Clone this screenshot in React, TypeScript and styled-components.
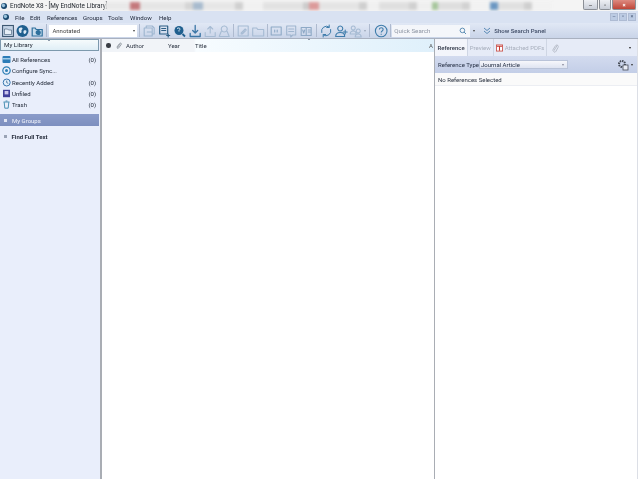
import React from "react";
import styled, { createGlobalStyle } from "styled-components";

const Global = createGlobalStyle`
  html, body { margin: 0; padding: 0; background: #fff; }
  body { font-family: Roboto, "Liberation Sans", sans-serif; }
  #root { width: 638px; height: 479px; overflow: hidden; }
`;

const Page = styled.div`
  width: 638px; height: 479px; display: flex; flex-direction: column;
  background: #fff; color: #1d2430; font-size: 6px; filter: blur(0.3px); overflow: hidden;
`;

const TitleBar = styled.header`
  height: 11px; flex: none; display: flex; align-items: center; position: relative;
  background: #f4f4f4; overflow: hidden;
`;
const AppIcon = styled.span<{ $mx: string }>`
  width: 6px; height: 6px; border-radius: 50%; flex: none;
  margin: ${(p) => p.$mx};
  background: radial-gradient(circle at 40% 40%, #9cc4dd 0 22%, #1c4c73 45%, #123754 100%);
`;
const TitleText = styled.span`
  font-size: 6.4px; color: #23282f; white-space: nowrap; width: 95px; flex: none;
`;
const Ghosts = styled.div`
  flex: 1; display: flex; align-items: center; height: 11px; filter: blur(1.5px); min-width: 0;
`;
const Ghost = styled.span<{ $w: number; $c: string }>`
  width: ${(p) => p.$w}px; height: 8px; background: ${(p) => p.$c}; flex: none;
`;
const WinControls = styled.div`
  display: flex; height: 10px; flex: none; margin-right: 2px; gap: 1px; align-self: flex-start;
`;
const WinBtn = styled.span<{ $w: number; $bg: string; $c: string }>`
  width: ${(p) => p.$w}px; height: 10px; display: flex; align-items: center; justify-content: center;
  background: ${(p) => p.$bg}; border: 1px solid #8b8f96; border-top: none; box-sizing: border-box;
  border-radius: 0 0 2px 2px; color: ${(p) => p.$c}; font-size: 6px; font-weight: 700; line-height: 1;
`;

const MenuBar = styled.nav`
  height: 12px; flex: none; display: flex; align-items: center;
  background: #d9e2f2; font-size: 6.1px;
`;
const MenuItem = styled.span<{ $w: number }>`
  width: ${(p) => p.$w}px; flex: none; white-space: nowrap; color: #20283a;
`;
const DocControls = styled.div`
  margin-left: auto; margin-right: 2px; display: flex; gap: 1px;
`;
const DocBtn = styled.span`
  width: 8px; height: 8px; background: #bccbe3; border: 1px solid #aebbd3; box-sizing: border-box;
  display: flex; align-items: center; justify-content: center; font-size: 5.5px; line-height: 1; color: #4a5a78;
`;

const Toolbar = styled.div`
  height: 16px; flex: none; display: flex; align-items: center; padding-left: 2px;
  background: linear-gradient(#e1e8f5, #c9d4e8); border-bottom: 1px solid #a9b1c0; box-sizing: border-box;
`;
const Group = styled.div`
  display: flex; align-items: center; gap: 0.5px;
`;
const Sep = styled.span<{ $mx?: number }>`
  width: 1px; height: 13px; background: #aebacf; flex: none; margin: 0 ${(p) => p.$mx ?? 2}px;
`;
const StyleSelect = styled.div`
  width: 88px; height: 12px; background: #fff; flex: none; display: flex; align-items: center;
  justify-content: space-between; padding: 0 2px 0 3px; box-sizing: border-box; color: #444;
`;
const Caret = styled.span<{ $c?: string }>`
  display: block; width: 0; height: 0; flex: none; border-left: 1.5px solid transparent; border-right: 1.5px solid transparent;
  border-top: 2px solid ${(p) => p.$c ?? "#444"};
`;
const IconSvg = styled.svg<{ $w?: number }>`
  width: ${(p) => p.$w ?? 14.4}px; height: 14px; flex: none;
`;
const SearchBox = styled.div`
  width: 78px; height: 12px; flex: none; background: #f4f6fa; display: flex; align-items: center;
  justify-content: space-between; padding: 0 3px 0 2px; box-sizing: border-box; color: #8d95a3; font-size: 6.2px;
`;
const SearchCaret = styled(Caret)`
  margin-left: 3px;
`;
const ShowPanel = styled.span`
  margin-left: 8px; font-weight: 500; color: #3f4c66; white-space: nowrap; display: flex; align-items: center; gap: 3px;
`;

const Body = styled.main`
  flex: 1; display: flex; min-height: 0; background: #d7dfee;
`;
const Left = styled.aside`
  width: 100px; flex: none; background: #e9eefb; display: flex; flex-direction: column;
`;
const LibHead = styled.div`
  height: 12px; flex: none; display: flex; align-items: center; padding-left: 3px; margin: 0 1px 0 0;
  border: 1px solid #7d99ad; background: linear-gradient(#f6fbfc, #dfeef6); box-sizing: border-box;
  color: #1c2430; position: relative; font-size: 6.2px;
`;
const Nub = styled.span`
  position: absolute; top: 0; left: 47px; width: 2px; height: 1px; background: #8d9bab;
`;
const LibList = styled.ul`
  list-style: none; margin: 3px 0 0; padding: 0;
`;
const LibRow = styled.li`
  height: 11.3px; display: flex; align-items: center; padding: 0 4px 0 1.5px; gap: 1.5px; color: #222a38;
`;
const LibCount = styled.span`
  margin-left: auto;
`;
const GroupsBar = styled.div`
  height: 12px; flex: none; margin: 4px 1px 0 0; background: linear-gradient(#8a9bc9, #7d8fbf);
  display: flex; align-items: center; gap: 5px; padding-left: 4px; color: #f2f4fb;
`;
const Square = styled.span<{ $c: string }>`
  width: 3px; height: 3px; background: ${(p) => p.$c}; flex: none;
`;
const FindRow = styled.div`
  display: flex; align-items: center; gap: 5px; padding-left: 3.5px; margin-top: 4.5px; height: 12px;
  font-weight: 700; color: #2a3140;
`;
const Divider = styled.div`
  width: 2px; flex: none; background: #a9adb4;
`;
const Middle = styled.section`
  width: 332px; flex: none; display: flex; flex-direction: column; background: #fff;
`;
const ColHead = styled.div`
  height: 13px; flex: none; display: flex; align-items: center; padding-left: 3px; position: relative;
  background: linear-gradient(90deg, #f1f4f8 0, #f1f4f8 92px, #f7fcff 94px, #dff0fb 100%);
  color: #2a3240;
`;
const Dot = styled.span`
  display: block; width: 4.5px; height: 4.5px; border-radius: 50%; background: #3a3e45; margin-left: 1px;
`;
const Col = styled.span<{ $w: number }>`
  width: ${(p) => p.$w}px; flex: none; display: flex; align-items: center;
`;
const SortMark = styled.span`
  position: absolute; top: 0; left: 206px; width: 2px; height: 1px; background: #8d9bab;
`;
const ResizeMark = styled.span`
  position: absolute; right: 1px; top: 3px; font-size: 6px; color: #555;
`;
const Right = styled.section`
  flex: 1; display: flex; flex-direction: column; min-width: 0; border-left: 1px solid #a9adb4; border-right: 1px solid #dcdfe6;
`;
const Tabs = styled.div`
  height: 17px; flex: none; display: flex; align-items: stretch; background: #e6ebf7; padding-right: 6px;
`;
const Tab = styled.span<{ $active?: boolean; $last?: boolean }>`
  display: flex; align-items: center; gap: 2px; padding: 0 2px 0 ${(p) => (p.$last ? 4 : p.$active ? 2.5 : 2)}px; white-space: nowrap;
  background: ${(p) => (p.$active ? "#f3f5fb" : "transparent")};
  color: ${(p) => (p.$active ? "#333a4a" : "#a7aebc")};
  font-weight: ${(p) => (p.$active ? 500 : 400)};
  border-right: ${(p) => (p.$last ? "none" : "1px solid #cfd6e4")};
`;
const TabEnd = styled.span`
  margin-left: auto; align-self: center; display: flex;
`;
const TypeBar = styled.div`
  height: 17px; flex: none; background: linear-gradient(#d3dbef, #c3cee7); display: flex; align-items: center;
  padding: 0 3px; color: #263044;
`;
const TypeLabel = styled.span`
  width: 41px; flex: none; white-space: nowrap;
`;
const TypeSelect = styled.div`
  width: 89px; height: 9px; background: linear-gradient(#f6f7fb, #dfe4f1); border: 1px solid #b9c3d8;
  box-sizing: border-box; display: flex; align-items: center; justify-content: space-between; padding: 0 3px 0 1px;
`;
const Gear = styled.span`
  margin-left: auto; display: flex; align-items: center; gap: 2px; margin-right: 1px;
`;
const NoRefs = styled.div`
  height: 12px; flex: none; display: flex; align-items: center; padding-left: 3px; background: #fafafa;
  border-bottom: 1px solid #eceef3; color: #2a3240;
`;
const RightBody = styled.div`
  flex: 1; background: #fff;
`;

const Tool = ({ d, c = "#7f9cb8", sw = 1.1 }: { d: string; c?: string; sw?: number }) => (
  <IconSvg viewBox="0 0 14 14" fill="none" stroke={c} strokeWidth={sw} strokeLinejoin="round" strokeLinecap="round">
    <path d={d} />
  </IconSvg>
);

const Globe = ({ size = 12 }: { size?: number }) => (
  <IconSvg $w={15} viewBox="0 0 14 14">
    <circle cx="7" cy="7" r={size / 2} fill="#1f5f8e" />
    <path d="M3.500 4.200C5 3 7 3.500 7 4.500S5.500 6 6 7.500 4.500 9.500 3.800 8 3 5.500 3.500 4.200zM8.500 6.500c1-.5 2.500-.3 2.500.8s-1 2.700-2 2.700-1.500-3-.5-3.500z" fill="#dbe9f5" />
  </IconSvg>
);

const LibIcon = ({ kind }: { kind: string }) => {
  const box = { width: 9, height: 9, flex: "none" as const };
  if (kind === "all")
    return (
      <svg viewBox="0 0 9 9" style={box}>
        <rect x="0.5" y="1" width="8" height="7" rx="1" fill="#2c7cb8" />
        <rect x="0.5" y="3.2" width="8" height="1.2" fill="#bfe0f5" />
      </svg>
    );
  if (kind === "sync")
    return (
      <svg viewBox="0 0 9 9" style={box}>
        <circle cx="4.5" cy="4.5" r="3.7" fill="none" stroke="#2d7fb5" strokeWidth="1.2" />
        <circle cx="4.5" cy="4.5" r="1.5" fill="#2d7fb5" />
      </svg>
    );
  if (kind === "recent")
    return (
      <svg viewBox="0 0 9 9" style={box}>
        <circle cx="4.7" cy="4.5" r="3.5" fill="#e3effa" stroke="#3b78b0" strokeWidth="1" />
        <path d="M4.7 2.6v2l1.5 .8" stroke="#33618f" strokeWidth=".8" fill="none" />
      </svg>
    );
  if (kind === "unfiled")
    return (
      <svg viewBox="0 0 9 9" style={box}>
        <rect x="1" y="0.8" width="7" height="7.4" fill="#3f3f9a" />
        <rect x="2.6" y="2" width="3.8" height="3.4" fill="#c9c4ec" />
      </svg>
    );
  return (
    <svg viewBox="0 0 9 9" style={box}>
      <path d="M1.5 2h6M2.2 2.2l.6 6h3.4l.6-6M3.6 1h1.8" fill="none" stroke="#3a86ad" strokeWidth=".9" />
    </svg>
  );
};

const rows = [
  { k: "all", t: "All References", n: "(0)" },
  { k: "sync", t: "Configure Sync...", n: "" },
  { k: "recent", t: "Recently Added", n: "(0)" },
  { k: "unfiled", t: "Unfiled", n: "(0)" },
  { k: "trash", t: "Trash", n: "(0)" },
];

const menus: [string, number][] = [
  ["File", 15], ["Edit", 17], ["References", 36], ["Groups", 25], ["Tools", 22], ["Window", 29], ["Help", 20],
];

const ghosts: [number, string][] = [
  [25, "#e9e9e9"], [10, "#c4787c"], [45, "#e5e5e5"], [8, "#d5d5d5"], [10, "#a8bbce"], [32, "#e6e6e6"], [8, "#d0d0d0"],
  [20, "#f1f1f1"], [40, "#e2e2e2"], [6, "#cccccc"], [10, "#dc9a9a"], [40, "#e4e4e4"], [8, "#cfcfcf"], [12, "#f0f0f0"],
  [30, "#dfdfdf"], [8, "#d0d0d0"], [15, "#efefef"], [6, "#a6c69b"], [24, "#dedede"], [8, "#d2d2d2"], [20, "#f2f2f2"],
  [8, "#6b97c2"], [26, "#e0e0e0"], [8, "#cfcfcf"], [20, "#f2f2f2"],
];

export default function App() {
  return (
    <Page>
      <Global />
      <TitleBar>
        <AppIcon $mx="0 3px 0 1px" />
        <TitleText>EndNote X8 - [My EndNote Library]</TitleText>
        <Ghosts>
          {ghosts.map(([w, c], i) => (
            <Ghost key={i} $w={w} $c={c} />
          ))}
        </Ghosts>
        <WinControls>
          <WinBtn $w={15} $bg="linear-gradient(#eef0f4,#c9ced8)" $c="#555">–</WinBtn>
          <WinBtn $w={12} $bg="linear-gradient(#eef0f4,#c9ced8)" $c="#555">▫</WinBtn>
          <WinBtn $w={24} $bg="linear-gradient(#dd8a80,#bf4638)" $c="#fff">×</WinBtn>
        </WinControls>
      </TitleBar>
      <MenuBar>
        <AppIcon $mx="0 6px 0 3px" />
        {menus.map(([m, w]) => (
          <MenuItem key={m} $w={w}>{m}</MenuItem>
        ))}
        <DocControls>
          <DocBtn>–</DocBtn>
          <DocBtn>▫</DocBtn>
          <DocBtn>×</DocBtn>
        </DocControls>
      </MenuBar>
      <Toolbar>
        <Group>
          <IconSvg $w={12} viewBox="0 0 12 14" fill="#c4d3e6" stroke="#3e5872" strokeWidth="1.1">
            <rect x="0.600" y="1.500" width="10.800" height="11" />
            <path d="M2.500 5h3l1 1h3v4.500h-7z" fill="#e6eef7" strokeWidth=".6" />
          </IconSvg>
          <Globe />
          <IconSvg viewBox="0 0 14 14" fill="none" stroke="#2d6f9c" strokeWidth="1.2">
            <path d="M2 4h3l1 1.500h6V12H2z" fill="#c6dbec" />
            <circle cx="8" cy="8.500" r="2" fill="#2d6f9c" />
          </IconSvg>
        </Group>
        <Sep $mx={2} />
        <StyleSelect>
          Annotated
          <Caret />
        </StyleSelect>
        <Sep $mx={2} />
        <Group>
          <Tool d="M2 4h8v8H2zM4 4V2h6l2 2v6h-2M5 8h4" c="#9db5cf" />
          <Tool d="M2.500 2h8v8h-8zM4.500 4.500h4M4.500 6.500h4M11 10v3M9.500 11.500h3" c="#2d5f86" sw={1.2} />
          <IconSvg $w={15} viewBox="0 0 14 14" fill="none">
            <circle cx="6.500" cy="6.500" r="4.500" fill="#1f5f8e" />
            <path d="M4.500 4.500c1.500-1 3-.5 3 .5s-1.500 1-1 2.500" stroke="#dbe9f5" strokeWidth="1" />
            <path d="M10 10l2.500 2.500" stroke="#1f5f8e" strokeWidth="1.800" />
          </IconSvg>
          <Tool d="M7 1.500v7M4.500 6.500L7 9l2.500-2.500M2 9.500v3h10v-3" c="#3a75a6" sw={1.3} />
          <Tool d="M7 9V2.500M4.500 5L7 2.500 9.500 5M2 8.500v4h10v-4" c="#a6bbd3" />
          <Tool d="M7 2a3 3 0 1 0 .1 0M4 7.500L2 12.500h10L10 7.500" c="#a6bbd3" />
        </Group>
        <Sep $mx={1.5} />
        <Group>
          <Tool d="M2 2h10v10H2zM5 9l4-4 1 1-4 4H5z" c="#a6bbd3" />
          <Tool d="M1.500 4h4l1 1.500h6V12h-11zM1.500 4v8" c="#a6bbd3" />
        </Group>
        <Sep $mx={1.5} />
        <Group>
          <Tool d="M2 3h10v8H2zM5.500 6v2M8 6v2" c="#8ea9c6" />
          <Tool d="M2.500 2h9v9h-3l-2 2v-2h-4zM4.500 5h5M4.500 7.500h5" c="#a0b6cf" />
          <Tool d="M2 3.500h10v8H2zM7 3.500v8M3.500 6l1 3 1-3M9 6h2M9 8h2" c="#8ea9c6" />
        </Group>
        <Sep $mx={2.5} />
        <Group>
          <Tool d="M2.500 8.500A5 5 0 0 1 10 3M11.500 5.500A5 5 0 0 1 4 11M10 1v2.500H7.500M4 13v-2.500h2.500" c="#3e7cab" sw={1} />
          <Tool d="M6 7a2.500 2.500 0 1 1 .1 0M1.500 12.500c0-3 2-4 4.500-4s4.500 1 4.500 4zM11 6v4M9 8h4" c="#3e7cab" />
          <Tool d="M4 6a2 2 0 1 1 .1 0M1 10c0-2 1.500-3 3-3s3 1 3 3zM9 9a2 2 0 1 1 .1 0M6 13c0-2 1.500-3 3-3s3 1 3 3z" c="#a6bbd3" />
          <Caret $c="#98a5b8" />
        </Group>
        <Sep $mx={3.5} />
        <IconSvg viewBox="0 0 14 14" fill="none" stroke="#3e7cab" strokeWidth="1.100">
          <circle cx="7" cy="7" r="5.800" />
          <path d="M5.200 5.500c0-2.500 3.800-2.300 3.700 0 0 1.500-1.900 1.500-1.900 3M7 9.800v1" />
        </IconSvg>
        <Sep $mx={1.5} />
        <SearchBox>
          Quick Search
          <IconSvg $w={8} viewBox="0 0 8 8" fill="none" stroke="#4f83ad" strokeWidth=".9">
            <circle cx="3.400" cy="3.400" r="2.300" />
            <path d="M5 5l2 2" />
          </IconSvg>
        </SearchBox>
        <SearchCaret />
        <ShowPanel>
          <svg viewBox="0 0 8 8" width="8" height="8" fill="none" stroke="#5a8ab5" strokeWidth="1">
            <path d="M1 1l3 2.500L7 1M1 4l3 2.500L7 4" />
          </svg>
          Show Search Panel
        </ShowPanel>
      </Toolbar>
      <Body>
        <Left>
          <LibHead>
            My Library
            <Nub />
          </LibHead>
          <LibList>
            {rows.map((r) => (
              <LibRow key={r.t}>
                <LibIcon kind={r.k} />
                {r.t}
                <LibCount>{r.n}</LibCount>
              </LibRow>
            ))}
          </LibList>
          <GroupsBar>
            <Square $c="#dfe4f3" />
            My Groups
          </GroupsBar>
          <FindRow>
            <Square $c="#9aa3b5" />
            Find Full Text
          </FindRow>
        </Left>
        <Divider />
        <Middle>
          <ColHead>
            <Col $w={10}><Dot /></Col>
            <Col $w={11}>
              <svg viewBox="0 0 8 8" width="7" height="7" fill="none" stroke="#8d939d" strokeWidth="1">
                <path d="M6 2L3 6c-1 1 0 2 1 1l3-4c1-1.500-1-2.500-2-1L2 6" />
              </svg>
            </Col>
            <Col $w={42}>Author</Col>
            <Col $w={27}>Year</Col>
            <Col $w={100}>Title</Col>
            <SortMark />
            <ResizeMark>A</ResizeMark>
          </ColHead>
        </Middle>
        <Right>
          <Tabs>
            <Tab $active>Reference</Tab>
            <Tab>Preview</Tab>
            <Tab>
              <svg viewBox="0 0 8 8" width="7" height="8">
                <rect x="0.500" y="0.500" width="7" height="7" fill="#fff" stroke="#c9534d" />
                <path d="M1 2h6M4 2v5" stroke="#c63a33" strokeWidth="1.200" />
              </svg>
              Attached PDFs
            </Tab>
            <Tab $last>
              <svg viewBox="0 0 8 10" width="8" height="10" fill="none" stroke="#b7bdc9" strokeWidth="1">
                <path d="M6.500 2L3 7.500c-1 1.500.8 2.500 1.800 1L7 4.500c1.200-2-1.500-3.500-2.700-1.500L1.500 7.500" />
              </svg>
            </Tab>
            <TabEnd>
              <Caret $c="#222" />
            </TabEnd>
          </Tabs>
          <TypeBar>
            <TypeLabel>Reference Type:</TypeLabel>
            <TypeSelect>
              Journal Article
              <Caret $c="#889" />
            </TypeSelect>
            <Gear>
              <svg viewBox="0 0 12 12" width="12" height="12">
                <circle cx="5" cy="5" r="3" fill="none" stroke="#444a55" strokeWidth="2" strokeDasharray="1.500 .8" />
                <rect x="6" y="6" width="5" height="5" fill="#e8ecf5" stroke="#444a55" strokeWidth=".8" />
              </svg>
              <Caret $c="#333" />
            </Gear>
          </TypeBar>
          <NoRefs>No References Selected</NoRefs>
          <RightBody />
        </Right>
      </Body>
    </Page>
  );
}
